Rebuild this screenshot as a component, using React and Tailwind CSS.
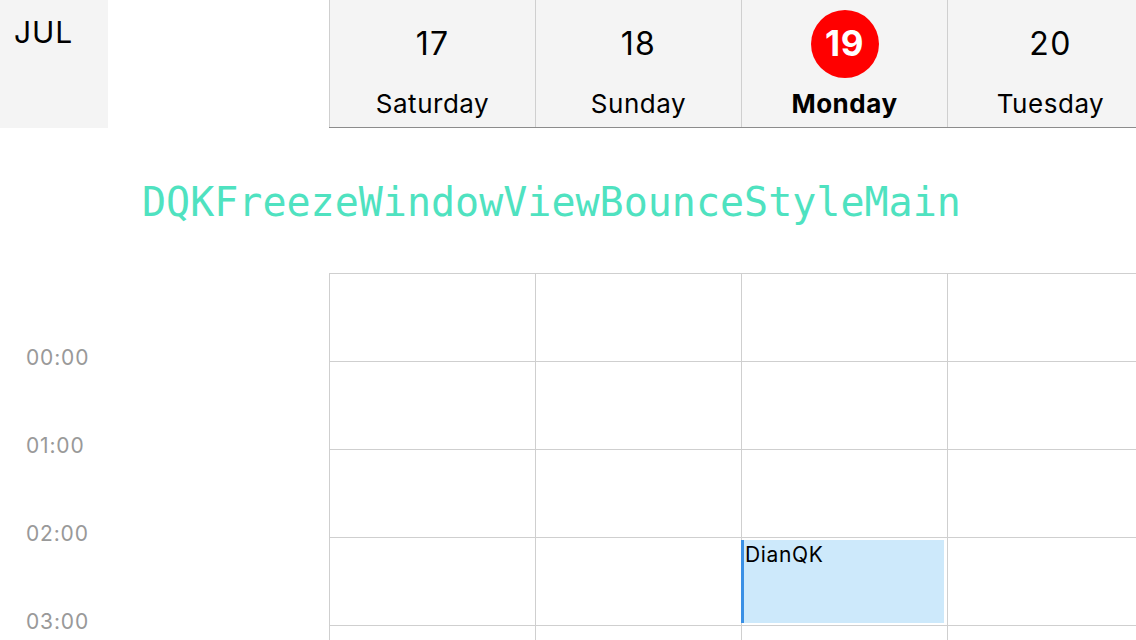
import React from 'react';

const days = [
  { num: '17', name: 'Saturday' },
  { num: '18', name: 'Sunday' },
  { num: '19', name: 'Monday', today: true },
  { num: '20', name: 'Tuesday' },
];

const hours = ['00:00', '01:00', '02:00', '03:00'];

const font = { fontFamily: 'Inter, "Noto Sans", sans-serif' };

const App = () => {
  return (
    <div className="w-[1136px] h-[640px] overflow-hidden bg-white text-black" style={font}>
      {/* header */}
      <div className="flex h-[128px]">
        <div className="w-[108px] h-full bg-[#f4f4f4] pl-[14px] pt-[13px] text-[30px] leading-[38px] tracking-[0.03em]">JUL</div>
        <div className="w-[221px] shrink-0" />
        <div className="flex-1 flex overflow-hidden bg-[#f4f4f4] border-b border-[#8c8c8c]">
          {days.map((d) => (
            <div
              key={d.num}
              className="w-[206px] shrink-0 h-full flex flex-col items-center border-l border-[#cfcfcf]"
            >
              <div className="h-[88px] flex items-center justify-center pb-[1px]">
                {d.today ? (
                  <div className="w-[68px] h-[68px] rounded-full bg-[#ff0000] text-white font-bold text-[35px] tracking-[0.02em] flex items-center justify-center">
                    {d.num}
                  </div>
                ) : (
                  <span className="text-[32px] tracking-[0.04em]">{d.num}</span>
                )}
              </div>
              <div className={`text-[26px] leading-[30px] mt-[1px] tracking-[0.02em] ${d.today ? 'font-bold' : ''}`}>{d.name}</div>
            </div>
          ))}
        </div>
      </div>

      {/* title */}
      <div className="h-[145px] flex items-center pl-[142px]">
        <span
          className="text-[40px] leading-none text-[#4fe2c0] mt-[3px]"
          style={{ fontFamily: '"DejaVu Sans Mono", "Liberation Mono", monospace' }}
        >
          DQKFreezeWindowViewBounceStyleMain
        </span>
      </div>

      {/* grid */}
      <div className="flex">
        <div className="w-[329px] shrink-0 flex flex-col">
          {hours.map((h) => (
            <div key={h} className="h-[88px] flex items-end pl-[26px]">
              <span className="text-[21px] leading-[24px] mb-[-9px] tracking-[0.04em] text-[#999999]">{h}</span>
            </div>
          ))}
        </div>
        <div className="flex-1 flex flex-col overflow-hidden">
          {hours.concat(['']).map((h, r) => (
            <div key={r} className="flex h-[88px] shrink-0 border-t border-[#cfcfcf]">
              {days.map((d, c) => (
                <div key={d.num} className="relative w-[206px] shrink-0 border-l border-[#cfcfcf]">
                  {r === 3 && c === 2 && (
                    <div className="absolute left-[-1px] top-[2px] w-[203px] h-[83px] bg-[#cde9fb] border-l-[3px] border-[#3a90e5] pl-[1px] pt-[2px] text-[21px] leading-[26px] tracking-[0.03em]">
                      DianQK
                    </div>
                  )}
                </div>
              ))}
            </div>
          ))}
        </div>
      </div>
    </div>
  );
};

export default App;
